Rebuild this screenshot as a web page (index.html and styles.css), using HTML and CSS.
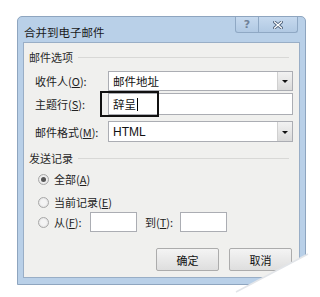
FILE: index.html
```html
<!DOCTYPE html>
<html lang="zh-CN">
<head>
    <meta charset="UTF-8">
    <title>合并到电子邮件</title>
    <link rel="stylesheet" href="styles.css">
</head>
<body>
    <div class="dialog">
        <div class="titlebar">
            <span class="title">合并到电子邮件</span>
            <div class="caption-btns">
                <span class="cap help">?</span>
                <span class="cap close">
                    <svg width="10" height="8" viewBox="0 0 10 8">
                        <path d="M1.5 1 L8.5 7 M8.5 1 L1.5 7" stroke="#4b5f7a" stroke-width="3" stroke-linecap="square"/>
                        <path d="M1.5 1 L8.5 7 M8.5 1 L1.5 7" stroke="#ffffff" stroke-width="1.3" stroke-linecap="square"/>
                    </svg>
                </span>
            </div>
        </div>

        <div class="client">
            <!-- 邮件选项 -->
            <div class="group-head"><span>邮件选项</span><i class="rule"></i></div>

            <div class="row r-to">
                <span class="label">收件人(<u>O</u>):</span>
                <div class="combo"><span class="val">邮件地址</span><span class="drop"></span></div>
            </div>

            <div class="row r-subject">
                <span class="label">主题行(<u>S</u>):</span>
                <div class="textbox"><span class="val">辞呈</span><span class="caret"></span></div>
                <span class="focus-mark"></span>
            </div>

            <div class="row r-format">
                <span class="label">邮件格式(<u>M</u>):</span>
                <div class="combo"><span class="val latin">HTML</span><span class="drop"></span></div>
            </div>

            <!-- 发送记录 -->
            <div class="group-head g2"><span>发送记录</span><i class="rule"></i></div>

            <div class="radio-row rr1">
                <span class="radio checked"></span><span>全部(<u>A</u>)</span>
            </div>
            <div class="radio-row rr2">
                <span class="radio"></span><span>当前记录(<u>E</u>)</span>
            </div>
            <div class="radio-row rr3">
                <span class="radio"></span><span class="from-label">从(<u>F</u>):</span>
                <span class="small-box"></span>
                <span class="to-label">到(<u>T</u>):</span>
                <span class="small-box"></span>
            </div>

            <div class="buttons">
                <span class="btn">确定</span>
                <span class="btn">取消</span>
            </div>
        </div>
    </div>

    <!-- page curl over the dialog's lower right corner -->
    <svg class="curl" width="100" height="60" viewBox="0 0 100 60">
        <polygon points="88,17 100,12 100,60 8,60 16,55" fill="#ffffff"/>
        <line x1="88" y1="17" x2="16" y2="55" stroke="#e2e5e9" stroke-width="1.5"/>
    </svg>
</body>
</html>
```

FILE: styles.css
```css
body {
    margin: 0;
    background: #ffffff;
    font-family: "Noto Sans CJK SC", "Noto Sans", sans-serif;
    font-size: 11px;
    color: #1e1e1e;
    width: 320px;
    height: 297px;
    overflow: hidden;
    position: relative;
}

.dialog {
    margin: 16px 0 0 17px;
    width: 287px;
    height: 267px;
    border: 1px solid #8ea5bf;
    border-radius: 5px 5px 0 0;
    background: #b9d0e8;
    display: flex;
    flex-direction: column;
}

.titlebar {
    height: 25px;
    display: flex;
    align-items: flex-start;
    padding-left: 6px;
}

.title {
    flex: 1;
    font-size: 11.5px;
    line-height: 14px;
    margin-top: 8px;
    color: #1a1a1a;
}

.caption-btns {
    display: flex;
    margin-right: 7px;
}

.cap {
    height: 15px;
    border: 1px solid #8fa8c4;
    border-top: none;
    background: linear-gradient(#c6d9ee, #b1c9e3);
    display: flex;
    align-items: center;
    justify-content: center;
    font-family: "DejaVu Sans", sans-serif;
    font-weight: bold;
}

.help {
    width: 22px;
    font-size: 11px;
    color: #6f8199;
    border-radius: 0 0 0 3px;
}

.close {
    width: 38px;
    border-left: none;
    border-radius: 0 0 3px 0;
}

.client {
    flex: 1;
    margin: 0 5px 6px 5px;
    border: 1px solid #99aec6;
    background: #f0f0ee;
    padding: 7px 6px 0 5px;
    position: relative;
}

.group-head {
    display: flex;
    align-items: center;
    line-height: 14px;
    height: 14px;
    color: #2a2a2a;
}

.group-head .rule {
    flex: 1;
    height: 1px;
    background: #d8d8d6;
    margin: 1px 4px 0 5px;
}

.g2 {
    margin-top: 9px;
}

.row {
    display: flex;
    align-items: center;
    position: relative;
    padding-left: 6px;
}

.label {
    width: 73px;
    white-space: nowrap;
    color: #222;
}

u {
    text-decoration: underline;
    text-underline-offset: 1px;
}

.r-to {
    margin-top: 7px;
    height: 20px;
}

.r-subject {
    margin-top: 2px;
    height: 22px;
}

.r-format {
    margin-top: 6px;
    height: 21px;
}

.combo, .textbox {
    flex: 1;
    height: 100%;
    box-sizing: border-box;
    border: 1px solid #abadb3;
    background: #ffffff;
    display: flex;
    align-items: center;
}

.val {
    flex: 1;
    padding-left: 4px;
    font-size: 11.5px;
    color: #111;
}

.latin {
    font-family: "Liberation Sans", Arial, sans-serif;
    font-size: 12px;
}

.drop {
    width: 14px;
    height: 100%;
    border-left: 1px solid #d0d0d0;
    background: linear-gradient(#f2f2f2, #dadada);
    position: relative;
}

.drop::after {
    content: "";
    position: absolute;
    left: 4px;
    top: 50%;
    margin-top: -1px;
    border-left: 3px solid transparent;
    border-right: 3px solid transparent;
    border-top: 3px solid #111;
}

.textbox .val {
    flex: none;
}

.caret {
    width: 1px;
    height: 13px;
    background: #000;
    margin-left: 1px;
}

.focus-mark {
    position: absolute;
    left: 71px;
    top: -2px;
    width: 55px;
    height: 22px;
    border: 2px solid #111;
}

.radio-row {
    display: flex;
    align-items: center;
    padding-left: 9px;
    height: 16px;
}

.rr1 {
    margin-top: 6px;
}

.rr2 {
    margin-top: 7px;
}

.rr3 {
    margin-top: 2px;
    height: 20px;
}

.radio {
    width: 9px;
    height: 9px;
    border: 1px solid #a8a8a8;
    border-radius: 50%;
    background: radial-gradient(circle, #f4f4f4 40%, #d9d9d9 100%);
    margin-right: 5px;
    position: relative;
}

.radio.checked::after {
    content: "";
    position: absolute;
    left: 2px;
    top: 2px;
    width: 5px;
    height: 5px;
    border-radius: 50%;
    background: #555;
}

.from-label {
    width: 36px;
}

.small-box {
    width: 47px;
    height: 20px;
    box-sizing: border-box;
    border: 1px solid #abadb3;
    background: #fff;
}

.to-label {
    margin-left: 8px;
    width: 35px;
}

.buttons {
    display: flex;
    justify-content: flex-end;
    gap: 10px;
    margin-top: 16px;
    padding-right: 1px;
}

.btn {
    width: 63px;
    height: 23px;
    box-sizing: border-box;
    border: 1px solid #acacac;
    border-radius: 2px;
    background: linear-gradient(#f4f4f4, #dedede);
    display: flex;
    align-items: center;
    justify-content: center;
    color: #111;
}

.curl {
    position: absolute;
    left: 220px;
    top: 237px;
    width: 100px;
    height: 60px;
}
```
